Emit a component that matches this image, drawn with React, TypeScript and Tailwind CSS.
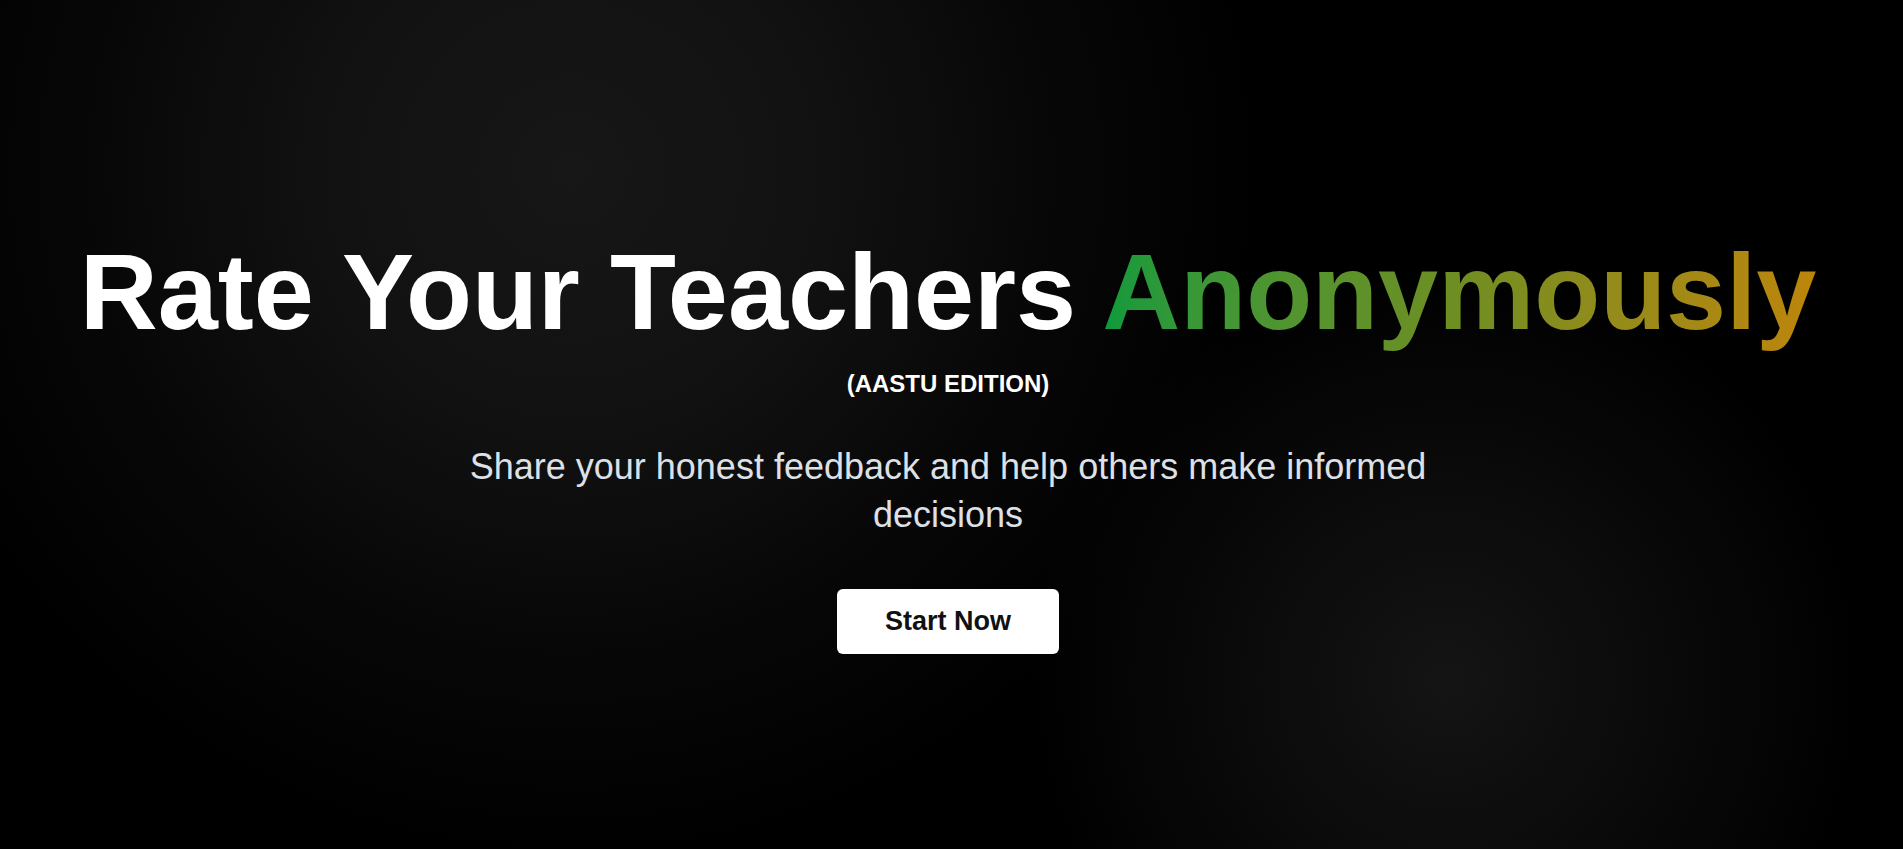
import React from "react";

export default function App() {
  return (
    <div className="min-h-[1000px] w-full bg-black bg-[radial-gradient(circle_at_30%_17%,#171717_0%,#111111_260px,#060606_500px,transparent_700px),radial-gradient(circle_at_76%_68%,#141414_0%,#0b0b0b_190px,transparent_420px)] font-['Liberation_Sans',Arial,sans-serif]">
      <main className="flex flex-col items-center pt-[227px] pr-[7px] text-center">
        <h1 className="text-[108px] font-bold leading-[1.2] whitespace-nowrap text-white">
          Rate Your Teachers{" "}
          <span className="bg-gradient-to-r from-[#079a3c] via-[#6f8e22] to-[#bd850a] bg-clip-text text-transparent">
            Anonymously
          </span>
        </h1>
        <p className="mt-[11px] text-2xl font-bold leading-8 text-white">(AASTU EDITION)</p>
        <p className="mt-[43px] max-w-5xl text-4xl leading-12 text-[#dde0e6]">
          Share your honest feedback and help others make informed decisions
        </p>
        <button className="mt-[50px] rounded-md bg-white px-12 py-4 text-[27px] font-bold leading-[33px] text-[#111111]">
          Start Now
        </button>
      </main>
    </div>
  );
}
